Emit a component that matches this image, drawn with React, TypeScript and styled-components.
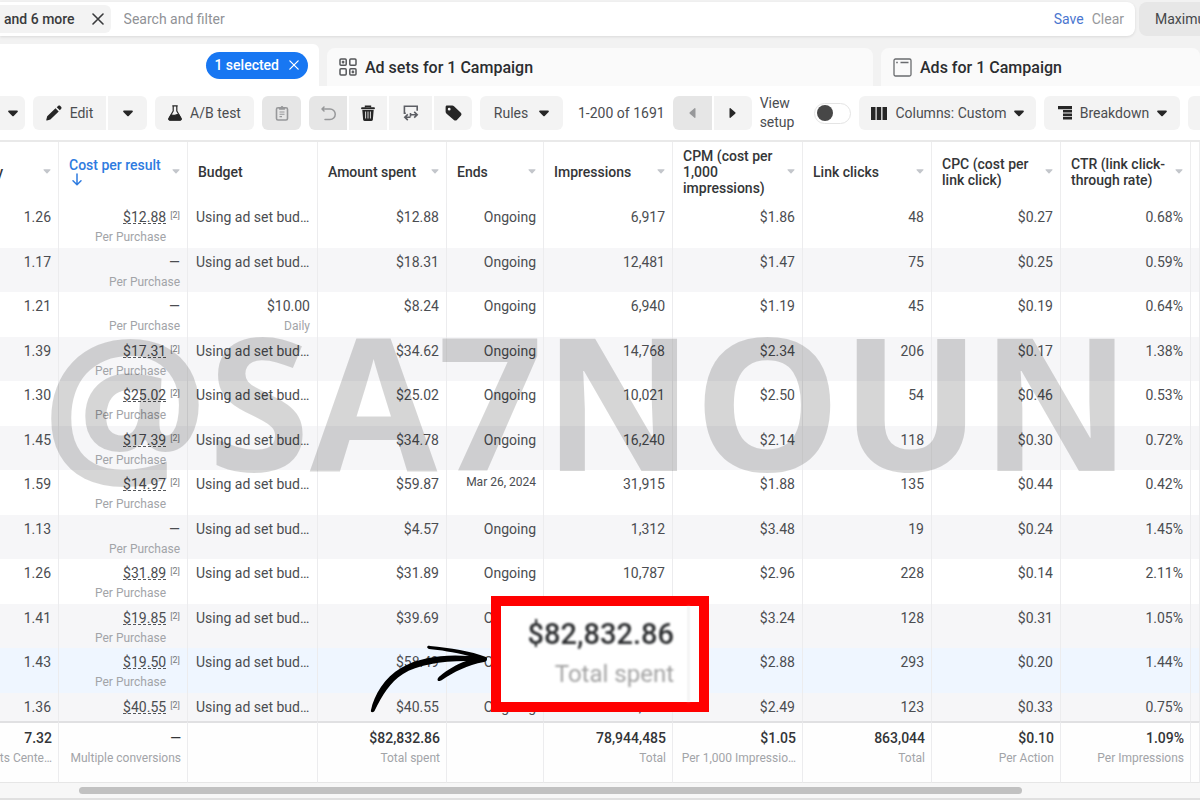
import React from "react";
import styled, { createGlobalStyle, css } from "styled-components";

const Global = createGlobalStyle`
  *, *::before, *::after { box-sizing: border-box; }
  html, body, #root { height: 100%; }
  body {
    margin: 0;
    overflow: hidden;
    background: #f2f2f2;
    color: #4b4d51;
    font-family: Roboto, "Liberation Sans", sans-serif;
    font-size: 14px;
  }
  button, input { font: inherit; color: inherit; }
`;

const Page = styled.div`
  position: relative;
  display: flex;
  flex-direction: column;
  height: 100%;
  overflow: hidden;
  border-bottom: 2px solid #e0e0e0;
`;

const FilterRow = styled.div`
  display: flex;
  gap: 4px;
  padding-top: 2px;
  height: 36px;
  flex: none;
`;

const SearchBar = styled.div`
  display: flex;
  align-items: center;
  flex: 1;
  min-width: 0;
  padding-right: 11px;
  background: #fff;
  border-radius: 0 8px 8px 0;
  box-shadow: 0 1px 3px rgba(0, 0, 0, 0.1);
`;

const FilterChip = styled.div`
  display: flex;
  align-items: center;
  gap: 17px;
  height: 28px;
  padding: 0 7px 0 4px;
  border-radius: 0 6px 6px 0;
  background: #f3f3f3;
  color: #3a3b3d;
  font-weight: 500;
  white-space: nowrap;
`;

const PlainButton = styled.button<{ $tone?: string }>`
  display: flex;
  align-items: center;
  padding: 0;
  border: 0;
  background: none;
  color: ${(p) => p.$tone || "inherit"};
  cursor: pointer;
`;

const SearchInput = styled.input`
  flex: 1;
  min-width: 0;
  padding: 0 13px;
  border: 0;
  outline: 0;
  background: none;
  &::placeholder { color: #909296; opacity: 1; }
`;

const FilterActions = styled.div`
  display: flex;
  gap: 8px;
`;

const DateButton = styled.button`
  width: 61px;
  padding: 0 0 0 16px;
  border: 0;
  border-radius: 8px 0 0 8px;
  background: #e7e7e7;
  color: #45474a;
  text-align: left;
  white-space: nowrap;
  overflow: hidden;
`;

const Tabs = styled.nav`
  display: flex;
  align-items: flex-end;
  gap: 8px;
  height: 50px;
  flex: none;
`;

const Tab = styled.div<{ $active?: boolean; $basis: number; $grow?: number }>`
  display: flex;
  align-items: center;
  flex: ${(p) => p.$grow || 0} 1 ${(p) => p.$basis}px;
  min-width: 0;
  overflow: hidden;
  white-space: nowrap;
  ${(p) =>
    p.$active
      ? css`
          height: 42px;
          justify-content: flex-end;
          padding-right: 11px;
          background: #fff;
          border-radius: 0 6px 0 0;
        `
      : css`
          height: 38px;
          padding-left: 12px;
          background: #fafafa;
          border-radius: 8px 8px 0 0;
        `}
`;

const TabLink = styled.a`
  display: flex;
  align-items: center;
  gap: 8px;
  color: #2b2d30;
  font-size: 16px;
  font-weight: 500;
  text-decoration: none;
`;

const SelectedPill = styled.button`
  display: flex;
  align-items: center;
  gap: 10px;
  height: 27px;
  padding: 0 9px 0 8px;
  border: 0;
  border-radius: 14px;
  background: #1877f2;
  color: #fff;
  font-weight: 500;
`;

const Toolbar = styled.div`
  display: flex;
  align-items: center;
  gap: 8px;
  flex: none;
  height: 56px;
  background: #fff;
  border-bottom: 2px solid #e9e9e9;
  white-space: nowrap;
`;

const Group = styled.div`
  display: flex;
  gap: 2px;
  & > button { border-radius: 0; }
  & > button:first-child { border-radius: 6px 0 0 6px; }
  & > button:last-child { border-radius: 0 6px 6px 0; }
`;

const Tool = styled.button<{ $w: number; $off?: boolean; $gap?: number; $edge?: "left" | "right" }>`
  display: flex;
  align-items: center;
  justify-content: center;
  gap: ${(p) => p.$gap || 8}px;
  flex: none;
  width: ${(p) => p.$w}px;
  height: 34px;
  padding: 0;
  border: 0;
  border-radius: ${(p) => (p.$edge === "left" ? "0 6px 6px 0" : p.$edge === "right" ? "6px 0 0 6px" : "6px")};
  background: ${(p) => (p.$off ? "#e6e6e6" : "#f3f3f3")};
  color: ${(p) => (p.$off ? "#97989a" : "#4b4d50")};
  & > svg { color: ${(p) => (p.$off ? "#97989a" : "#262626")}; }
`;

const PageCount = styled.span`
  padding-left: 7px;
`;

const SetupLabel = styled.label`
  display: flex;
  align-items: center;
  gap: 20px;
  line-height: 19px;
  white-space: pre-line;
`;

const Switch = styled.input`
  appearance: none;
  display: flex;
  align-items: center;
  width: 37px;
  height: 21px;
  margin: 0;
  padding: 0 2px;
  border: 1px solid #e4e4e4;
  border-radius: 11px;
  background: #fff;
  &::before {
    content: "";
    width: 16px;
    height: 16px;
    border-radius: 50%;
    background: #474747;
  }
`;

const TableArea = styled.main`
  flex: 1;
  min-height: 0;
  overflow: hidden;
  background: #fff;
`;

const Table = styled.table`
  width: 100%;
  table-layout: fixed;
  border-collapse: separate;
  border-spacing: 0;
`;

const HeadCell = styled.th`
  height: 61px;
  padding: 0 7px 2px 10px;
  border-right: 1px solid #ededee;
  color: #343638;
  font-weight: 500;
  line-height: 16px;
  text-align: left;
  overflow: hidden;
`;

const HeadInner = styled.div<{ $clipLeft?: boolean; $blue?: boolean }>`
  display: flex;
  align-items: center;
  justify-content: ${(p) => (p.$clipLeft ? "flex-end" : "space-between")};
  gap: ${(p) => (p.$clipLeft ? 40 : 4)}px;
  color: ${(p) => (p.$blue ? "#2e7be0" : "inherit")};
  & > svg { flex: none; color: #c3c6cb; }
`;

const SortLabel = styled.span`
  display: flex;
  flex-direction: column;
  white-space: nowrap;
`;

const Row = styled.tr<{ $hover?: boolean }>`
  height: 45px;
  background: #fff;
  &:nth-child(even) { height: 44px; background: #f6f6f8; }
  &:nth-child(n) { ${(p) => p.$hover && "background: #eff6ff;"} }
  &:last-child { background: #f6f6f8; }
`;

const Cell = styled.td<{ $left?: boolean }>`
  padding: 5px 7px 0 8px;
  border-right: 1px solid #ececee;
  vertical-align: top;
  text-align: ${(p) => (p.$left ? "left" : "right")};
  line-height: 18px;
  white-space: nowrap;
  overflow: hidden;
`;

const Sub = styled.div<{ $inset?: boolean }>`
  padding-right: ${(p) => (p.$inset ? 14 : 0)}px;
  margin-top: 3px;
  color: #a2a4a8;
  font-size: 12px;
  line-height: 17px;
`;

const Cost = styled.div`
  display: flex;
  align-items: flex-start;
  justify-content: flex-end;
  gap: 4px;
  height: 18px;
`;

const Amount = styled.a`
  height: 16px;
  border-bottom: 1px dashed #55575a;
  color: inherit;
  text-decoration: none;
`;

const Note = styled.span`
  color: #77797c;
  font-size: 9px;
  line-height: 15px;
`;

const SmallDate = styled.div`
  font-size: 12px;
  line-height: 14px;
`;

const FootCell = styled.td`
  position: sticky;
  bottom: 0;
  height: 62px;
  padding: 6px 6px 0 8px;
  border-top: 2px solid #e0e0e2;
  border-right: 1px solid #ececee;
  border-bottom: 1px solid #e6e6e6;
  background: #fefefe;
  color: #333538;
  font-weight: 500;
  line-height: 18px;
  text-align: right;
  vertical-align: top;
  white-space: nowrap;
  overflow: hidden;
  & ${Sub} { font-weight: 400; }
`;

const FootLine = styled.div`
  display: flex;
  justify-content: flex-end;
`;

const ScrollTrack = styled.div`
  flex: none;
  height: 15px;
  padding: 4px 178px 0 79px;
  background: #f7f7f7;
`;

const ScrollThumb = styled.div`
  height: 7px;
  border-radius: 4px;
  background: #c1c1c1;
`;

const Watermark = styled.div`
  position: absolute;
  top: 274px;
  left: 42px;
  color: rgba(0, 0, 0, 0.16);
  font-family: "Open Sans", sans-serif;
  font-size: 185px;
  font-weight: 700;
  line-height: 250px;
  white-space: nowrap;
  pointer-events: none;
`;

const Callout = styled.aside`
  position: absolute;
  top: 596px;
  left: 491px;
  width: 218px;
  height: 116px;
  border: 10px solid #ff0000;
  padding-right: 10px;
  background: #fff;
`;

const CalloutInner = styled.div`
  height: 96px;
  padding-top: 13px;
  padding-right: 14px;
  border-right: 1px solid #e2e2e2;
  text-align: right;
  filter: blur(1px);
`;

const CalloutValue = styled.div`
  color: #2c2e30;
  font-size: 29px;
  font-weight: 500;
  line-height: 30px;
`;

const CalloutLabel = styled.div`
  margin-top: 10px;
  color: #a3a3a3;
  font-size: 24px;
  line-height: 30px;
`;

const Arrow = styled.svg`
  position: absolute;
  top: 640px;
  left: 368px;
`;

const Caret = ({ s = 10 }: { s?: number }) => (
  <svg width={s} height={s === 10 ? 7 : 5} viewBox="0 0 10 7" fill="currentColor" aria-hidden>
    <path d="M1 .5h8c.8 0 1.2.8.6 1.4L5.7 6a1 1 0 0 1-1.4 0L.4 1.9C-.2 1.300.2.5 1 .5z" />
  </svg>
);

const Cross = ({ s, w = 1.6 }: { s: number; w?: number }) => (
  <svg width={s} height={s} viewBox="0 0 12 12" stroke="currentColor" strokeWidth={w} strokeLinecap="round" aria-hidden>
    <path d="M1 1l10 10M11 1L1 11" />
  </svg>
);

const Side = ({ left }: { left?: boolean }) => (
  <svg width="7" height="10" viewBox="0 0 7 10" fill="currentColor" aria-hidden>
    <path d={left ? "M6.500.8v8.400c0 .6-.6.9-1 .5L.8 5.700a1 1 0 0 1 0-1.400L5.500.3c.4-.4 1-.1 1 .5z" : "M.5.8v8.400c0 .6.6.9 1 .5l4.700-4a1 1 0 0 0 0-1.400L1.500.3C1.100-.1.5.2.5.8z"} />
  </svg>
);

const Pencil = () => (
  <svg width="16" height="16" viewBox="0 0 16 16" fill="currentColor" aria-hidden>
    <path d="M1.200 11.300L9.500 3.300l3.200 3.300-8.300 8-3.400.9c-.5.1-.9-.3-.7-.8zM10.700 2.200l1.400-1.200c.7-.6 1.500-.6 2.200 0l.7.700c.7.7.7 1.500 0 2.200l-1.200 1.400z" />
  </svg>
);

const Flask = () => (
  <svg width="14" height="16" viewBox="0 0 14 16" fill="none" stroke="currentColor" strokeWidth="1.200" strokeLinejoin="round" aria-hidden>
    <path d="M4.300.8h5.400M5.200 1v5L1 13.200c-.5 1 0 2 1 2h10c1 0 1.500-1 1-2L8.800 6V1" />
    <path d="M2.900 10.300c1.500-1 2.800.6 4.200 0 1.200-.6 2.400-1 3.800-.2l2 3.400c.4.800 0 1.500-.9 1.500H2c-.9 0-1.300-.7-.9-1.500z" fill="currentColor" />
  </svg>
);

const Clipboard = () => (
  <svg width="14" height="16" viewBox="0 0 14 16" fill="none" stroke="currentColor" strokeWidth="1.600" aria-hidden>
    <rect x="1.500" y="2.700" width="11" height="12.300" rx="1.500" />
    <path d="M4.200 4.200V3l1.600-.4C6 1 8 1 8.200 2.600l1.600.4v1.200z" fill="currentColor" strokeWidth="1" />
    <path d="M4.500 7h5M4.500 9.300h5M4.500 11.600h2.500" strokeWidth="1.100" />
  </svg>
);

const Undo = () => (
  <svg width="15" height="15" viewBox="0 0 15 15" fill="none" stroke="currentColor" strokeWidth="1.500" strokeLinecap="round" strokeLinejoin="round" aria-hidden>
    <path d="M3 1L1 3l2 2M1 3h8a5.200 5.200 0 0 1 0 10.500H4" />
  </svg>
);

const Trash = () => (
  <svg width="14" height="16" viewBox="0 0 14 16" fill="none" stroke="currentColor" aria-hidden>
    <path d="M4.500 2.500V1.200h5v1.300" strokeWidth="1.400" />
    <path d="M1 3.200h12" strokeWidth="1.900" strokeLinecap="round" />
    <path d="M1.300 5h11.400l-.8 9.300c0 1-.6 1.600-1.500 1.600H3.600c-.9 0-1.500-.6-1.500-1.600z" fill="currentColor" stroke="none" />
    <path d="M4.600 6.500v7M7 6.500v7M9.400 6.500v7" stroke="#f3f3f3" strokeWidth=".9" />
  </svg>
);

const Swap = () => (
  <svg width="16" height="16" viewBox="0 0 16 16" fill="none" stroke="#5c5e64" strokeWidth="1.600" aria-hidden>
    <path d="M2.800 8.300H1.400V1.300h12.800v4.500" />
    <path d="M4.800 9.300L1.800 12.200l3 2.900M2 12.200h5.500M11.200 6.800l3 2.900-3 2.900M14 9.700H7.500M7.500 8v3.500" />
  </svg>
);

const Tag = () => (
  <svg width="17" height="16" viewBox="0 0 17 16" fill="currentColor" fillRule="evenodd" aria-hidden>
    <path d="M2 .5h5.300c.6 0 1.200.2 1.700.7l6.800 6.600c.9.9.9 2.100 0 3l-3.900 4.100c-.9.9-2.100.9-3 0L1.600 8.700c-.7-.7-1-1.300-1-2.200V2C.6 1.100 1.100.5 2 .5zM4.200 2.800a1.400 1.400 0 1 0 0 2.800 1.400 1.400 0 0 0 0-2.800z" />
  </svg>
);

const Columns = () => (
  <svg width="16" height="13" viewBox="0 0 16 13" fill="currentColor" aria-hidden>
    <path d="M0 0h4.500v13H0zM5.700 0h4.500v13H5.700zM11.500 0H16v13h-4.500z" />
  </svg>
);

const Breakdown = () => (
  <svg width="14" height="14" viewBox="0 0 14 14" fill="currentColor" aria-hidden>
    <path d="M0 0h14v3.200H0zM5 4h9v2.600H5zM5 7.400h9V10H5zM5 10.800h9v2.700H5z" />
  </svg>
);

const Grid = () => (
  <svg width="18" height="18" viewBox="0 0 18 18" fill="none" stroke="#55575a" strokeWidth="1.500" aria-hidden>
    <rect x="1" y="1" width="6.200" height="6.200" rx="1" />
    <rect x="10.800" y="1" width="6.200" height="6.200" rx="1" />
    <rect x="1" y="10.800" width="6.200" height="6.200" rx="1" />
    <rect x="10.800" y="10.800" width="6.200" height="6.200" rx="1" />
    <path d="M4.100 2.800v2.600M2.800 4.100h2.600M13.900 12.600v2.600M12.600 13.900h2.600" />
  </svg>
);

const AdWindow = () => (
  <svg width="19" height="19" viewBox="0 0 19 19" fill="none" stroke="#6a6c6f" strokeWidth="1.300" aria-hidden>
    <rect x="1" y="1" width="17" height="17" rx="1.500" />
    <path d="M3.200 4.500h1.600M7.500 4.500h8" />
  </svg>
);

const SortArrow = styled.svg`
  margin-left: 2px;
`;

const DownArrow = () => (
  <SortArrow width="12" height="13" viewBox="0 0 12 13" fill="none" stroke="#2e7be0" strokeWidth="1.500" strokeLinecap="round" strokeLinejoin="round" aria-hidden>
    <path d="M6 1v10.500M2 7.800l4 3.900 4-3.900" />
  </SortArrow>
);

const widths = [59, 129, 130, 129, 97, 129, 130, 129, 129, 130];

const headers = ["Budget", "Amount spent", "Ends", "Impressions", "CPM (cost per 1,000 impressions)", "Link clicks", "CPC (cost per link click)", "CTR (link click-through rate)"];

const rows = [
  ["1.26", "$12.88", "", "$12.88", "Ongoing", "6,917", "$1.86", "48", "$0.27", "0.68%"],
  ["1.17", "", "", "$18.31", "Ongoing", "12,481", "$1.47", "75", "$0.25", "0.59%"],
  ["1.21", "", "$10.00", "$8.24", "Ongoing", "6,940", "$1.19", "45", "$0.19", "0.64%"],
  ["1.39", "$17.31", "", "$34.62", "Ongoing", "14,768", "$2.34", "206", "$0.17", "1.38%"],
  ["1.30", "$25.02", "", "$25.02", "Ongoing", "10,021", "$2.50", "54", "$0.46", "0.53%"],
  ["1.45", "$17.39", "", "$34.78", "Ongoing", "16,240", "$2.14", "118", "$0.30", "0.72%"],
  ["1.59", "$14.97", "", "$59.87", "Mar 26, 2024", "31,915", "$1.88", "135", "$0.44", "0.42%"],
  ["1.13", "", "", "$4.57", "Ongoing", "1,312", "$3.48", "19", "$0.24", "1.45%"],
  ["1.26", "$31.89", "", "$31.89", "Ongoing", "10,787", "$2.96", "228", "$0.14", "2.11%"],
  ["1.41", "$19.85", "", "$39.69", "Ongoing", "", "$3.24", "128", "$0.31", "1.05%"],
  ["1.43", "$19.50", "", "$58.49", "Ongoing", "", "$2.88", "293", "$0.20", "1.44%"],
  ["1.36", "$40.55", "", "$40.55", "Ongoing", "13,273", "$2.49", "123", "$0.33", "0.75%"],
];

const totals = [
  ["7.32", "Per Accounts Cente…"],
  ["—", "Multiple conversions"],
  ["", ""],
  ["$82,832.86", "Total spent"],
  ["", ""],
  ["78,944,485", "Total"],
  ["$1.05", "Per 1,000 Impressio…"],
  ["863,044", "Total"],
  ["$0.10", "Per Action"],
  ["1.09%", "Per Impressions"],
];

export default function App() {
  return (
    <Page>
      <Global />
      <FilterRow>
        <SearchBar>
          <FilterChip>
            and 6 more
            <PlainButton aria-label="Remove filter"><Cross s={12} /></PlainButton>
          </FilterChip>
          <SearchInput placeholder="Search and filter" aria-label="Search and filter" />
          <FilterActions>
            <PlainButton $tone="#4a76cf">Save</PlainButton>
            <PlainButton $tone="#97989b">Clear</PlainButton>
          </FilterActions>
        </SearchBar>
        <DateButton>Maximum</DateButton>
      </FilterRow>

      <Tabs>
        <Tab $active $basis={319}>
          <SelectedPill>1 selected <Cross s={10} w={1.5} /></SelectedPill>
        </Tab>
        <Tab $basis={546} $grow={1}>
          <TabLink href="#adsets"><Grid />Ad sets for 1 Campaign</TabLink>
        </Tab>
        <Tab $basis={319}>
          <TabLink href="#ads"><AdWindow />Ads for 1 Campaign</TabLink>
        </Tab>
      </Tabs>

      <Toolbar>
        <Tool $w={25} $edge="left" aria-label="More"><Caret /></Tool>
        <Group>
          <Tool $w={73}><Pencil />Edit</Tool>
          <Tool $w={39} aria-label="Edit options"><Caret /></Tool>
        </Group>
        <Tool $w={99}><Flask />A/B test</Tool>
        <Tool $w={39} $off aria-label="Paste"><Clipboard /></Tool>
        <Group>
          <Tool $w={38} $off aria-label="Undo"><Undo /></Tool>
          <Tool $w={38} aria-label="Delete"><Trash /></Tool>
          <Tool $w={43} aria-label="Export"><Swap /></Tool>
          <Tool $w={38} aria-label="Tag"><Tag /></Tool>
        </Group>
        <Tool $w={83} $gap={11}>Rules <Caret /></Tool>
        <PageCount>1-200 of 1691</PageCount>
        <Group>
          <Tool $w={39} $off aria-label="Previous page"><Side left /></Tool>
          <Tool $w={38} aria-label="Next page"><Side /></Tool>
        </Group>
        <SetupLabel>
          {"View\nsetup"}
          <Switch type="checkbox" />
        </SetupLabel>
        <Tool $w={177}><Columns />Columns: Custom <Caret /></Tool>
        <Tool $w={136}><Breakdown />Breakdown <Caret /></Tool>
        <Tool $w={40} $edge="right" aria-label="Reports"><Columns /></Tool>
      </Toolbar>

      <TableArea>
        <Table>
          <colgroup>
            {widths.map((w, i) => <col key={i} style={{ width: w }} />)}
            <col />
          </colgroup>
          <thead>
            <tr>
              <HeadCell><HeadInner $clipLeft>Frequency<Caret s={8} /></HeadInner></HeadCell>
              <HeadCell>
                <HeadInner $blue>
                  <SortLabel>Cost per result<DownArrow /></SortLabel>
                  <Caret s={8} />
                </HeadInner>
              </HeadCell>
              {headers.map((h) => (
                <HeadCell key={h}>
                  <HeadInner>{h}{h !== "Budget" && <Caret s={8} />}</HeadInner>
                </HeadCell>
              ))}
              <HeadCell />
            </tr>
          </thead>
          <tbody>
            {rows.map((r, n) => (
              <Row key={n} $hover={n === 10}>
                <Cell>{r[0]}</Cell>
                <Cell>
                  <Cost>
                    {r[1] ? <><Amount href="#result">{r[1]}</Amount><Note>[2]</Note></> : "—"}
                  </Cost>
                  <Sub $inset={!!r[1]}>Per Purchase</Sub>
                </Cell>
                {r[2] ? <Cell>{r[2]}<Sub>Daily</Sub></Cell> : <Cell $left>Using ad set bud…</Cell>}
                <Cell>{r[3]}</Cell>
                <Cell>{r[4] === "Ongoing" ? r[4] : <SmallDate>{r[4]}</SmallDate>}</Cell>
                {r.slice(5).map((v, i) => <Cell key={i}>{v}</Cell>)}
                <Cell />
              </Row>
            ))}
          </tbody>
          <tfoot>
            <tr>
              {totals.map(([v, s], i) => (
                <FootCell key={i}>
                  <FootLine>{v}</FootLine>
                  <Sub><FootLine>{s}</FootLine></Sub>
                </FootCell>
              ))}
              <FootCell />
            </tr>
          </tfoot>
        </Table>
      </TableArea>
      <ScrollTrack><ScrollThumb /></ScrollTrack>

      <Watermark>@SA7NOUN</Watermark>
      <Callout>
        <CalloutInner>
          <CalloutValue>$82,832.86</CalloutValue>
          <CalloutLabel>Total spent</CalloutLabel>
        </CalloutInner>
      </Callout>
      <Arrow width="122" height="74" viewBox="0 0 122 74" aria-hidden>
        <path d="M3 70C6 55 17 37 33 28 51 17 77 14 101 16 85 12 72 10 61 9 58 8 59 5 62 6 82 8 103 11 118 17 120 18 119 22 116 22 99 25 86 32 74 40 69 43 68 39 72 36 79 30 89 24 98 21 72 21 49 25 35 34 22 42 14 56 7 70 6 73 2 73 3 70z" />
      </Arrow>
    </Page>
  );
}
